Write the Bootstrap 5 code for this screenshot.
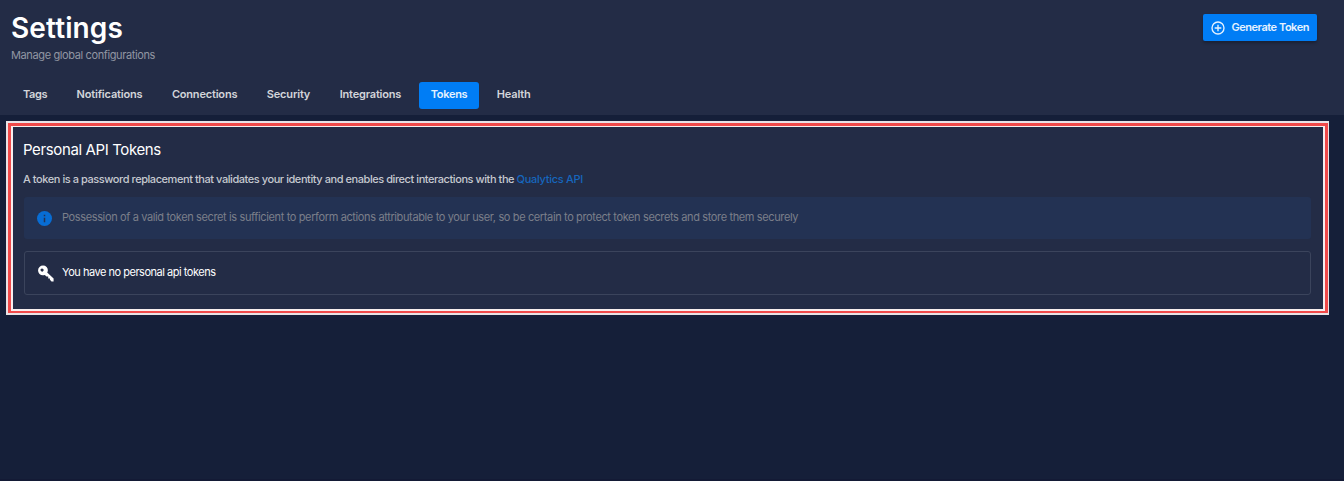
<!DOCTYPE html>
<html lang="en">
<head>
<meta charset="utf-8">
<meta name="viewport" content="width=device-width, initial-scale=1">
<title>Settings</title>
<link href="https://cdn.jsdelivr.net/npm/bootstrap@5.3.0/dist/css/bootstrap.min.css" rel="stylesheet">
<style>
body{background:#151f39;font-family:Inter,"Open Sans",sans-serif;font-size:11px;line-height:16px;color:#fff;height:481px;overflow:hidden;border-bottom:2px solid #131a35}
.page-head{background:#232c46;height:115px;padding:11px 27px 0 11px}
h1{font-size:28px;line-height:34px;font-weight:600;letter-spacing:.12px}
.sub{color:#9196a3;margin-top:2px;letter-spacing:-.38px}
.btn-gen{height:27px;width:114px;margin-top:3px;padding:0 8px;background:#007df5;border:0;border-radius:2px;font-size:11px;font-weight:600;color:#e6f2fe;letter-spacing:-.46px;box-shadow:0 2px 3px #0004}
.tabs{margin-top:19px;gap:5.5px}
.tabs .nav-link{height:27px;padding:4px 12px 7px;font-size:11px;line-height:16px;font-weight:600;letter-spacing:-.18px;color:#d3d5da;border-radius:3px;white-space:nowrap}
.tabs .nav-link.active{background:#007df5;color:#e6f2fe;letter-spacing:-.3px}
.tabs .tight{letter-spacing:-.4px}
.frame{margin:6px 15px 0 6px;height:194px;border:2px solid #e9e3e6;border-right-width:1px;background:#f04a4a;padding:3px 3px 2px}
.panel{height:100%;border:solid #f7eeee;border-width:1px 2px 2px;background:#232c46;padding:13px 12px 0 11px}
h2{font-size:15px;line-height:20px;font-weight:400;letter-spacing:-.38px;margin-left:-1px}
.lead-text{font-weight:500;color:#c6c9d0;margin:11px 0 0 -1px;letter-spacing:-.435px}
.lead-text a{color:#1666bd;letter-spacing:-.3px}
.note,.empty{padding-left:13px;border-radius:3px}
.note{height:42px;background:#233253;color:#7b7f8a;margin-top:10px;letter-spacing:-.37px}
.note span{margin:-2px 0 0 10px}
.empty{height:44px;border:1px solid #3b445c;margin-top:12px;padding-left:12px;letter-spacing:-.48px}
.empty span{margin:-2px 0 0 8px}
span,a,p{white-space:nowrap}
</style>
</head>
<body>
<header class="page-head">
  <div class="d-flex justify-content-between align-items-start">
    <div><h1 class="mb-0">Settings</h1><p class="sub mb-0">Manage global configurations</p></div>
    <button class="btn btn-gen d-flex align-items-center"><svg width="14" height="14" viewBox="0 0 14 14" fill="none" stroke="currentColor" stroke-width="1.35" class="flex-shrink-0 me-1"><circle cx="7" cy="7" r="6"/><path d="M7 3.7v6.6M3.7 7h6.6"/></svg><span class="ms-auto">Generate Token</span></button>
  </div>
  <nav class="nav tabs flex-nowrap">
    <a class="nav-link tight" href="#">Tags</a>
    <a class="nav-link" href="#">Notifications</a>
    <a class="nav-link" href="#">Connections</a>
    <a class="nav-link" href="#">Security</a>
    <a class="nav-link" href="#">Integrations</a>
    <a class="nav-link active" href="#">Tokens</a>
    <a class="nav-link" href="#">Health</a>
  </nav>
</header>
<main class="frame">
  <section class="panel">
    <h2 class="mb-0">Personal API Tokens</h2>
    <p class="lead-text mb-0">A token is a password replacement that validates your identity and enables direct interactions with the <a href="#" class="text-decoration-none">Qualytics API</a></p>
    <div class="note d-flex align-items-center"><svg width="15" height="15" viewBox="0 0 15 15" class="flex-shrink-0"><circle cx="7.5" cy="7.5" r="7.5" fill="#086dd4"/><path d="M6.75 3.75h1.5v1.5h-1.5zM6.75 6.75h1.5v4.5h-1.5z" fill="#233253"/></svg><span>Possession of a valid token secret is sufficient to perform actions attributable to your user, so be certain to protect token secrets and store them securely</span></div>
    <div class="empty d-flex align-items-center"><svg width="17" height="17" viewBox="0 0 17 17" class="flex-shrink-0"><path fill="#fff" fill-rule="evenodd" d="M9.6 2.1a5 5 0 0 0-7.1 0 4.7 4.7 0 0 0 0 6.8 4.8 4.8 0 0 0 5.3 1l1.7 1.7h1.7v1.8h1.7v1.4l1.6 1.6h2.1v-2.8L10.2 7.5a4.8 4.8 0 0 0-.6-5.4ZM6.3 5.9A1.5 1.5 0 1 1 4.2 3.8a1.5 1.5 0 0 1 2.1 2.1Z"/></svg><span>You have no personal api tokens</span></div>
  </section>
</main>
<script src="https://cdn.jsdelivr.net/npm/bootstrap@5.3.0/dist/js/bootstrap.bundle.min.js"></script>
</body>
</html>
